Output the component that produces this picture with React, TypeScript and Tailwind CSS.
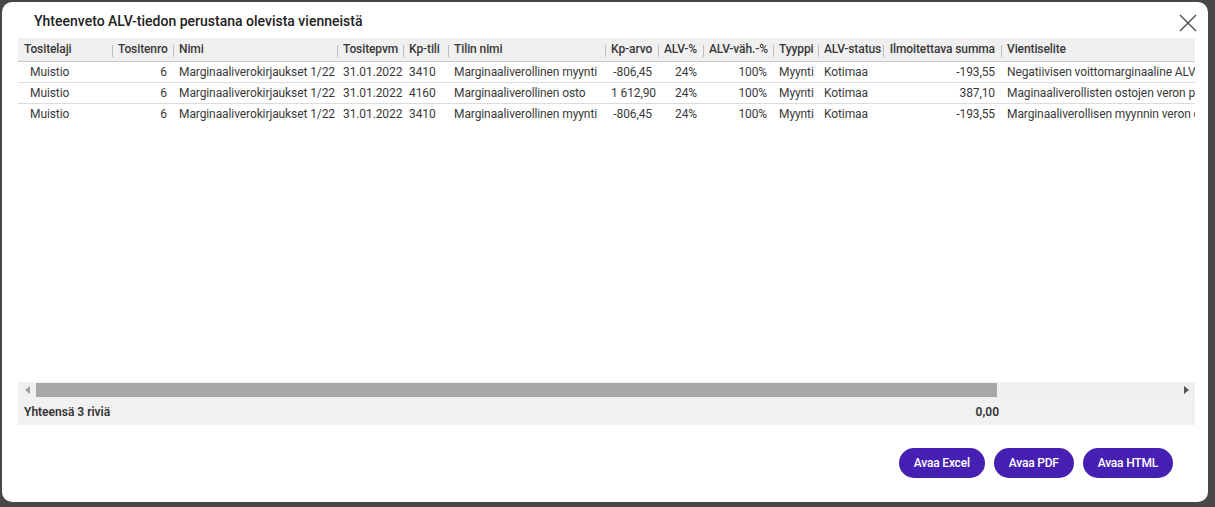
import React from 'react'

type Col = { key: string; label: string; w: number; right?: boolean; pl?: string }

const cols: Col[] = [
  { key: 'laji', label: 'Tositelaji', w: 94, pl: 'pl-3' },
  { key: 'nro', label: 'Tositenro', w: 61, right: true },
  { key: 'nimi', label: 'Nimi', w: 164 },
  { key: 'pvm', label: 'Tositepvm', w: 66 },
  { key: 'tili', label: 'Kp-tili', w: 45 },
  { key: 'tilinimi', label: 'Tilin nimi', w: 157 },
  { key: 'arvo', label: 'Kp-arvo', w: 53, right: true },
  { key: 'alv', label: 'ALV-%', w: 45, right: true },
  { key: 'vah', label: 'ALV-väh.-%', w: 70, right: true },
  { key: 'tyyppi', label: 'Tyyppi', w: 45 },
  { key: 'status', label: 'ALV-status', w: 65 },
  { key: 'summa', label: 'Ilmoitettava summa', w: 118, right: true },
  { key: 'selite', label: 'Vientiselite', w: 320 },
]

const rows: Record<string, string>[] = [
  {
    laji: 'Muistio', nro: '6', nimi: 'Marginaaliverokirjaukset 1/22', pvm: '31.01.2022', tili: '3410',
    tilinimi: 'Marginaaliverollinen myynti', arvo: '-806,45', alv: '24%', vah: '100%', tyyppi: 'Myynti',
    status: 'Kotimaa', summa: '-193,55', selite: 'Negatiivisen voittomarginaaline ALV-velka',
  },
  {
    laji: 'Muistio', nro: '6', nimi: 'Marginaaliverokirjaukset 1/22', pvm: '31.01.2022', tili: '4160',
    tilinimi: 'Marginaaliverollinen osto', arvo: '1 612,90', alv: '24%', vah: '100%', tyyppi: 'Myynti',
    status: 'Kotimaa', summa: '387,10', selite: 'Maginaaliverollisten ostojen veron palautus',
  },
  {
    laji: 'Muistio', nro: '6', nimi: 'Marginaaliverokirjaukset 1/22', pvm: '31.01.2022', tili: '3410',
    tilinimi: 'Marginaaliverollinen myynti', arvo: '-806,45', alv: '24%', vah: '100%', tyyppi: 'Myynti',
    status: 'Kotimaa', summa: '-193,55', selite: 'Marginaaliverollisen myynnin veron osuus',
  },
]

export default function App() {
  return (
    <div className="h-[507px] w-[1215px] bg-[#484848] pl-[2px] pt-[2px] font-['Roboto',sans-serif] text-[#333]">
      <div className="flex h-[500px] w-[1206px] flex-col rounded-[10px] bg-white">
        {/* title */}
        <div className="flex h-[36px] items-center justify-between pl-[32px] pr-[10px] pt-[3px]">
          <h2 className="text-[14px] font-medium text-[#222]">
            Yhteenveto ALV-tiedon perustana olevista vienneistä
          </h2>
          <button className="mt-[3px] text-[#555]">
            <svg width="20" height="20" viewBox="0 0 20 20" fill="none" stroke="currentColor" strokeWidth="1.5">
              <path d="M2 2L18 18M18 2L2 18" />
            </svg>
          </button>
        </div>

        {/* grid */}
        <div className="ml-[16px] flex h-[387px] w-[1177px] flex-col">
          <div className="flex-1 overflow-hidden">
            <table
              className="table-fixed border-collapse text-[12px] tracking-[-0.1px]"
              style={{ width: cols.reduce((a, c) => a + c.w, 0) }}
            >
              <colgroup>
                {cols.map((c) => (
                  <col key={c.key} style={{ width: c.w }} />
                ))}
              </colgroup>
              <thead>
                <tr className="h-[23px] border-b border-[#c9c9c9] bg-[#f0f0f0]">
                  {cols.map((c, i) => (
                    <th
                      key={c.key}
                      className={`relative overflow-hidden whitespace-nowrap px-[6px] font-medium text-[#383838] ${c.right ? 'text-right' : 'text-left'}`}
                    >
                      {i > 0 && <span className="absolute left-0 top-[7px] h-[12px] w-px bg-[#bdbdbd]" />}
                      {c.label}
                    </th>
                  ))}
                </tr>
              </thead>
              <tbody>
                {rows.map((r, idx) => (
                  <tr key={idx} className={`h-[21px] ${idx < rows.length - 1 ? 'border-b border-[#dcdcdc]' : ''}`}>
                    {cols.map((c) => (
                      <td
                        key={c.key}
                        className={`overflow-hidden whitespace-nowrap px-[6px] text-[#3a3a3a] ${c.right ? 'text-right' : 'text-left'} ${c.pl ?? ''}`}
                      >
                        {r[c.key]}
                      </td>
                    ))}
                  </tr>
                ))}
              </tbody>
            </table>
          </div>

          {/* horizontal scrollbar */}
          <div className="flex h-[16px] items-center bg-[#f0f0f0]">
            <span className="flex w-[18px] justify-center text-[#a0a0a0]">
              <svg width="5" height="8" viewBox="0 0 5 8"><path d="M5 0L0 4L5 8Z" fill="currentColor" /></svg>
            </span>
            <div className="h-[14px] w-[961px] bg-[#a8a8a8]" />
            <div className="flex-1" />
            <span className="flex w-[18px] justify-center text-[#555]">
              <svg width="5" height="8" viewBox="0 0 5 8"><path d="M0 0L5 4L0 8Z" fill="currentColor" /></svg>
            </span>
          </div>

          {/* footer */}
          <div className="flex h-[27px] items-center bg-[#f1f1f1] text-[12px] font-semibold text-[#333]">
            <span className="pl-[6px]">Yhteensä 3 riviä</span>
            <span className="ml-auto pr-[196px]">0,00</span>
          </div>
        </div>

        {/* buttons */}
        <div className="mt-[23px] flex justify-end gap-[9px] pr-[35px]">
          {['Avaa Excel', 'Avaa PDF', 'Avaa HTML'].map((t) => (
            <button
              key={t}
              className="h-[30px] rounded-full bg-[#4620b3] px-[15px] text-[12px] font-medium tracking-[-0.2px] text-white"
            >
              {t}
            </button>
          ))}
        </div>
      </div>
    </div>
  )
}
